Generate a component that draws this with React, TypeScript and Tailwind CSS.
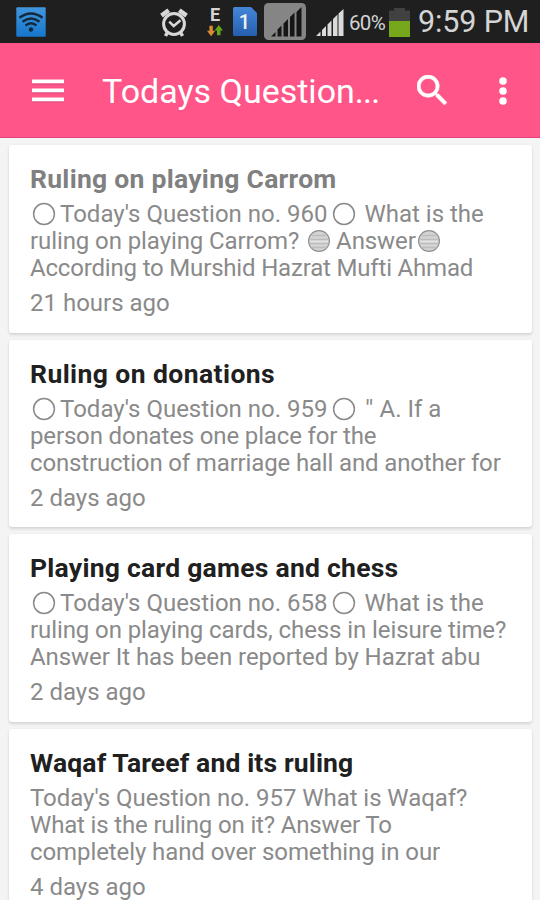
import React from 'react';

interface Line {
  content: React.ReactNode;
  className?: string;
}

interface Question {
  title: string;
  titleClass: string;
  lines: Line[];
  time: string;
}

const Ring = ({ className = '' }: { className?: string }) => (
  <svg viewBox="0 0 24 24" className={`inline-block h-6 w-6 align-[-4px] ${className}`}>
    <circle cx="12" cy="12" r="10.4" fill="none" stroke="#8a8a8a" strokeWidth="1.5" />
  </svg>
);

const Ball = ({ className = '' }: { className?: string }) => (
  <svg viewBox="0 0 24 24" className={`inline-block h-6 w-6 align-[-4px] ${className}`}>
    <circle cx="12" cy="12" r="10.4" fill="#d4d4d4" stroke="#909090" strokeWidth="1.2" />
    <path d="M4.5 6.5h15M2.5 10.5h19M2.5 14.5h19M4.5 18.5h15" stroke="#bcbcbc" strokeWidth="1.3" />
    <path d="M3 12.5h18" stroke="#e4e4e4" strokeWidth="1.5" />
  </svg>
);

const questions: Question[] = [
  {
    title: 'Ruling on playing Carrom',
    titleClass: 'text-[#808080] tracking-[0.27px]',
    lines: [
      { content: <><Ring className="ml-0.5 mr-[4px]" />Today's Question no. 960<Ring className="ml-[4px] mr-[3px]" /> What is the</> },
      { content: <>ruling on playing Carrom? <Ball className="ml-[2px] mr-[5px]" />Answer<Ball className="ml-[1px]" /></>, className: 'tracking-[-0.09px]' },
      { content: 'According to Murshid Hazrat Mufti Ahmad', className: 'tracking-[-0.18px]' },
    ],
    time: '21 hours ago',
  },
  {
    title: 'Ruling on donations',
    titleClass: 'text-[#202020] tracking-[0.42px]',
    lines: [
      { content: <><Ring className="ml-0.5 mr-[4px]" />Today's Question no. 959<Ring className="ml-[4px] mr-[4px]" /> <span className="tracking-[0.5px]">''</span> A. If a</> },
      { content: 'person donates one place for the', className: 'tracking-[-0.15px]' },
      { content: 'construction of marriage hall and another for', className: 'tracking-[-0.15px]' },
    ],
    time: '2 days ago',
  },
  {
    title: 'Playing card games and chess',
    titleClass: 'text-[#202020] tracking-[0.25px]',
    lines: [
      { content: <><Ring className="ml-0.5 mr-[4px]" />Today's Question no. 658<Ring className="ml-[4px] mr-[3px]" /> What is the</> },
      { content: 'ruling on playing cards, chess in leisure time?', className: 'tracking-[-0.09px]' },
      { content: 'Answer It has been reported by Hazrat abu', className: 'tracking-[-0.06px]' },
    ],
    time: '2 days ago',
  },
  {
    title: 'Waqaf Tareef and its ruling',
    titleClass: 'text-[#202020] tracking-[0.14px]',
    lines: [
      { content: "Today's Question no. 957 What is Waqaf?", className: 'tracking-[-0.05px]' },
      { content: 'What is the ruling on it? Answer To', className: 'tracking-[-0.16px]' },
      { content: 'completely hand over something in our', className: 'tracking-[-0.09px]' },
    ],
    time: '4 days ago',
  },
];

const StatusBar = () => (
  <div className="flex h-[43px] shrink-0 items-center bg-[#1e1f1e] text-[#d4d4d4]">
    <svg viewBox="0 0 30 30" className="ml-4 h-[30px] w-[30px]">
      <defs>
        <linearGradient id="wifi" x1="0" y1="0" x2="0" y2="1">
          <stop offset="0" stopColor="#4196dc" />
          <stop offset="1" stopColor="#1677cd" />
        </linearGradient>
      </defs>
      <rect x="0.3" y="0.3" width="29.4" height="29.4" rx="1" fill="url(#wifi)" />
      <g fill="none" stroke="#14283c" strokeWidth="2.5">
        <path d="M3.5 10.8Q15 2.2 26.5 10.8" />
        <path d="M6.5 14.8Q15 8.2 23.5 14.8" />
        <path d="M9.5 18.4Q15 14 20.5 18.4" />
      </g>
      <circle cx="15" cy="22.5" r="2.2" fill="#14283c" />
    </svg>

    <svg viewBox="0 0 28 30" className="mt-0.5 ml-[114px] h-[30px] w-7" fill="none" stroke="#d8d8d8">
      <circle cx="14" cy="16" r="10.4" strokeWidth="3" />
      <path d="M9.2 13.7l4.5 4.3 6.8-5.7" strokeWidth="2.5" />
      <path d="M1.5 7.6L8.7 2.2M19.3 2.2l7.2 5.4" strokeWidth="4.5" />
      <path d="M7.4 24.5L5.5 28M20.6 24.5l1.9 3.5" strokeWidth="3.5" />
    </svg>

    <div className="ml-[19px] flex h-8 w-4 flex-col items-center">
      <span className="h-[18px] text-[18px] leading-[18px] font-bold">E</span>
      <svg viewBox="0 0 16 12" className="mt-px h-3 w-4 shrink-0">
        <path d="M2.4 0.8h3.4v5h2.4L4.1 11.2 0 5.8h2.4z" fill="#dd8b32" />
        <path d="M10 10.2h3.5V5.5H16L11.8 0 7.6 5.5H10z" fill="#66a51b" />
      </svg>
    </div>

    <svg viewBox="0 0 24 29" className="ml-[10px] h-[29px] w-6">
      <defs>
        <linearGradient id="sim" x1="0" y1="0" x2="0" y2="1">
          <stop offset="0" stopColor="#4387d8" />
          <stop offset="1" stopColor="#265fae" />
        </linearGradient>
      </defs>
      <path d="M1.5 0H18l6 6v21.5a1.5 1.5 0 0 1-1.5 1.5h-21A1.5 1.5 0 0 1 0 27.5V1.5A1.5 1.5 0 0 1 1.5 0z" fill="url(#sim)" />
      <text x="11.5" y="21.5" textAnchor="middle" fontFamily="Roboto" fontSize="20" fontWeight="500" fill="#efefef">1</text>
    </svg>

    <svg viewBox="0 0 42 37" className="ml-[7px] h-[37px] w-[42px]">
      <rect width="42" height="37" rx="4.5" fill="#858585" />
      <path d="M7 33.5l4.5-4.5v4.5zM13.5 33.5v-7l4-4v11zM19.5 33.5V20.5l4.5-4.5v17.5zM26 33.5V14l4.5-4.5v24zM32.500 33.5V9l5-5v29.5z" fill="#161616" />
    </svg>

    <svg viewBox="0 0 28 27" className="mt-0.5 ml-[10px] h-[27px] w-7" fill="#dadada">
      <path d="M0 27l4.5-4.5V27zM6 27v-6l4-4v10zM11.5 27V15.5l4-4V27zM17 27V10l4.5-4.5V27zM22.5 27V4.5L27.5 0v27z" />
    </svg>

    <span className="mt-1 ml-[5px] w-[40px] text-[20.5px] tracking-[-0.7px] whitespace-nowrap">60%</span>

    <svg viewBox="0 0 21 29" className="mt-px h-[29px] w-[21px]">
      <path d="M0 2.5h5V0h11v2.5h5V13H0z" fill="#414141" />
      <path d="M0 13h21v16H0z" fill="#77a81b" />
    </svg>

    <span className="mt-px ml-[8px] text-[30.5px] tracking-[-0.15px] whitespace-nowrap">9:59 PM</span>
  </div>
);

const Toolbar = () => (
  <header className="flex h-[95px] shrink-0 items-center border-b border-[#e4437a] bg-[#ff5588] text-white">
    <svg viewBox="0 0 32 24" className="mt-px ml-8 h-6 w-8" fill="#ffffff">
      <path d="M0 0.5h32v4H0zM0 9.5h32v4H0zM0 18.5h32v4H0z" />
      <path d="M0 4.5h32v1H0zM0 13.5h32v1H0zM0 22.5h32v1H0z" fill="#d84c7c" />
    </svg>
    <h1 className="mt-0.5 ml-[38px] w-[311px] text-[34px] whitespace-nowrap">
      Todays Question<span className="tracking-[-0.8px]">...</span>
    </h1>
    <svg viewBox="3 3 17.5 17.5" className="ml-1 h-[30px] w-[30px]" fill="#ffffff" stroke="#ffffff" strokeWidth="0.3">
      <path d="M15.5 14h-.79l-.28-.27A6.471 6.471 0 0 0 16 9.5 6.5 6.5 0 1 0 9.5 16c1.61 0 3.09-.59 4.23-1.57l.27.28v.79l5 4.99L20.49 19l-4.99-5zm-6 0C7.01 14 5 11.99 5 9.5S7.01 5 9.5 5 14 7.01 14 9.5 11.99 14 9.5 14z" />
    </svg>
    <svg viewBox="0 0 8 28" className="mt-px ml-[52px] h-7 w-2" fill="#ffffff">
      <circle cx="4" cy="4" r="3.8" />
      <circle cx="4" cy="14" r="3.8" />
      <circle cx="4" cy="24" r="3.8" />
    </svg>
  </header>
);

const QuestionCard = ({ question }: { question: Question }) => (
  <article className="h-[187.67px] shrink-0 rounded-[3px] bg-white px-[21px] pt-[18px] shadow-[0_2px_3px_rgba(0,0,0,0.12),0_0_3px_rgba(0,0,0,0.04)]">
    <h2 className={`h-[38px] text-[26.5px] leading-8 font-bold whitespace-nowrap ${question.titleClass}`}>{question.title}</h2>
    <div className="text-[24px] leading-[27px] text-[#8a8a8a]">
      {question.lines.map((line, i) => (
        <p key={i} className={`h-[27px] whitespace-nowrap ${line.className ?? ''}`}>{line.content}</p>
      ))}
      <p className="mt-2 whitespace-nowrap">{question.time}</p>
    </div>
  </article>
);

export default function App() {
  return (
    <div className="flex h-[900px] w-[540px] flex-col overflow-hidden bg-[#f4f4f4] font-['Roboto',sans-serif]">
      <StatusBar />
      <Toolbar />
      <main className="flex flex-col gap-[7px] pt-[6.9px] pr-2 pl-[9px]">
        {questions.map((q) => (
          <QuestionCard key={q.title} question={q} />
        ))}
      </main>
    </div>
  );
}
